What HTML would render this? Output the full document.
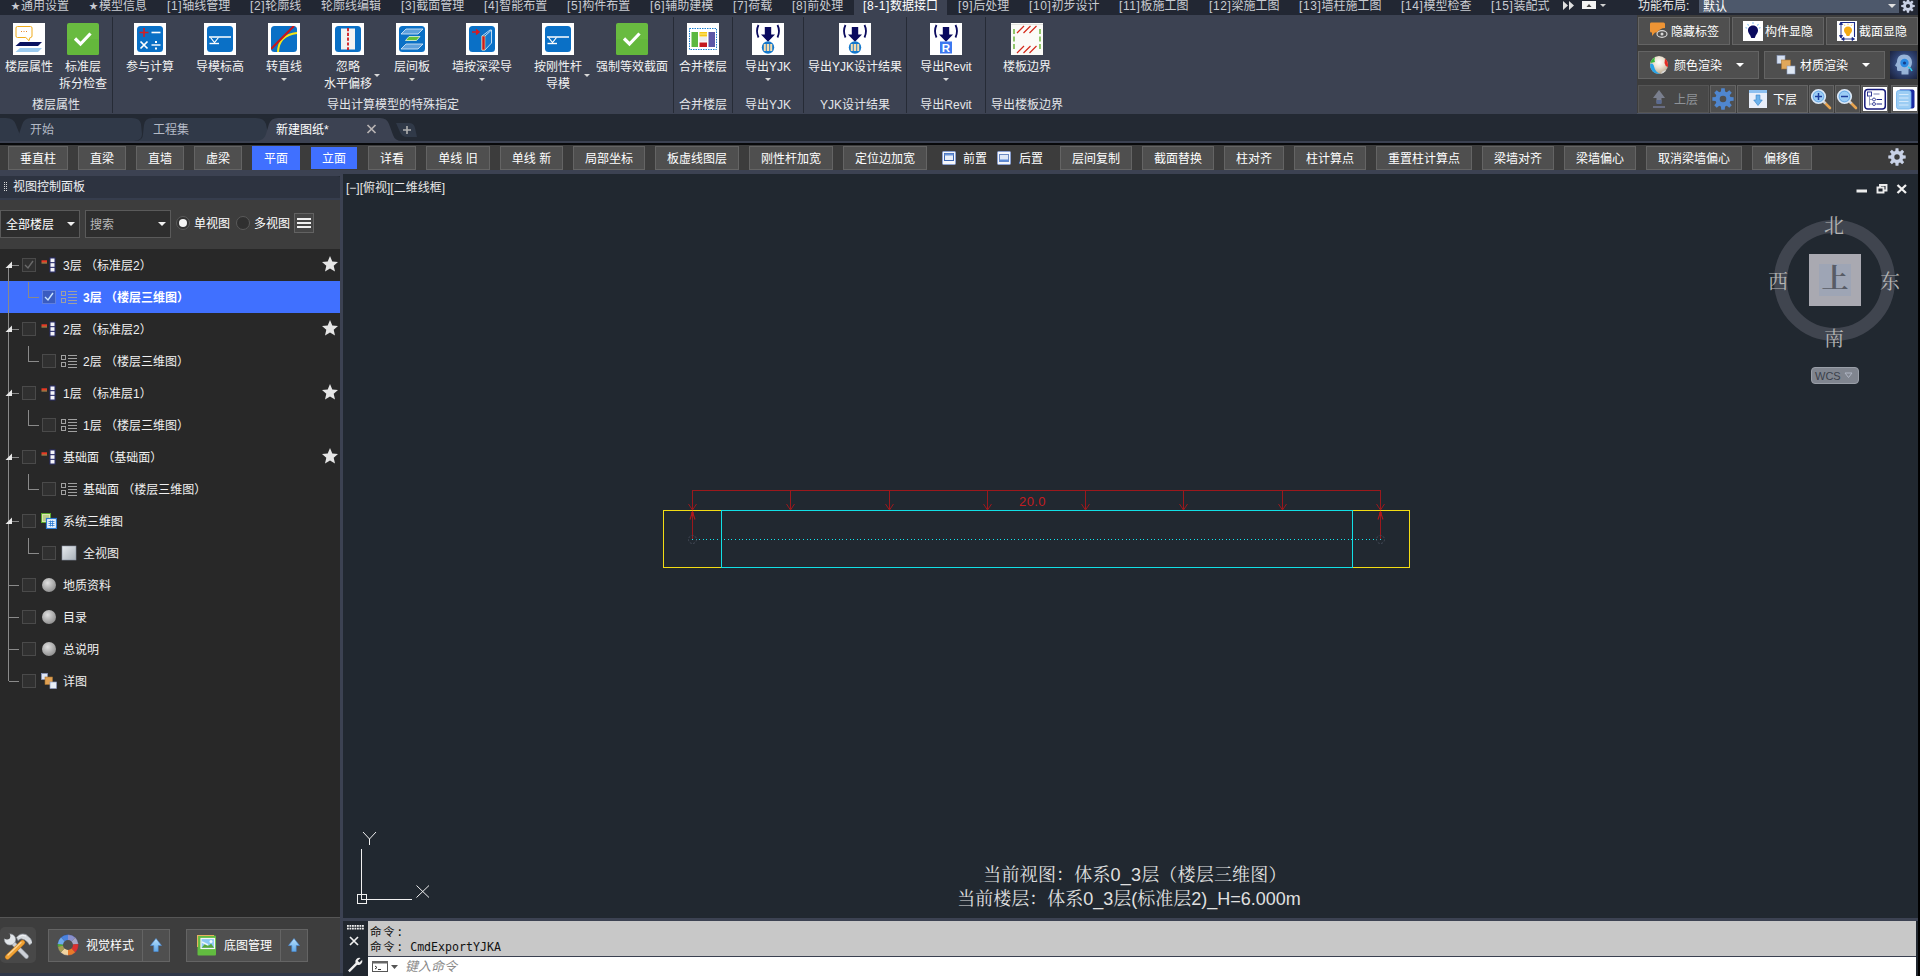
<!DOCTYPE html>
<html lang="zh-CN"><head><meta charset="utf-8"><title>结构建模</title>
<style>
*{box-sizing:border-box;margin:0;padding:0}
html,body{width:1920px;height:976px;overflow:hidden;background:#212830}
body{font-family:"Liberation Sans","Noto Sans CJK SC",sans-serif;font-size:12px;color:#e8e8e8;position:relative}
.a{position:absolute}
.t{position:absolute;white-space:nowrap;line-height:16px;height:16px;margin-top:1px}
.c{text-align:center}
.tab{position:absolute;top:-2px;height:16px;line-height:16px;white-space:nowrap;color:#c9ccd2}
.rl{position:absolute;white-space:nowrap;line-height:17px;text-align:center;color:#f2f2f2;transform:translateX(-50%)}
.gl{position:absolute;top:97px;white-space:nowrap;line-height:16px;text-align:center;color:#e4e6ea;transform:translateX(-50%)}
.sep{position:absolute;top:17px;width:1px;height:96px;background:#262b36}
.dd{position:absolute;width:0;height:0;border-left:3px solid transparent;border-right:3px solid transparent;border-top:3px solid #d8d8d8}
.ic{position:absolute;top:23px;width:32px;height:32px}
.tb{position:absolute;top:146px;height:24px;line-height:25px;background:#4f4f4f;border:1px solid #646464;text-align:center;color:#fff;white-space:nowrap}
.tb.on{background:#4070ff;border-color:#4070ff}
.rb{position:absolute;background:#4f4f4f;border:1px solid #646464}
.cb{position:absolute;width:14px;height:14px;border:1px solid #4a4a4a;background:#303030}
.tr{position:absolute;left:0;width:340px;height:32px}
.tt{position:absolute;margin-top:1px;line-height:16px;white-space:nowrap;color:#f0f0f0}
.star{position:absolute;left:321px;width:18px;height:18px}
</style></head><body>

<div class="a" style="left:0;top:0;width:1918px;height:15px;background:#222733;overflow:hidden">
<div class="a" style="left:854px;top:0;width:93px;height:15px;background:#3c4252"></div>
<div class="tab" style="left:11px"><span style="display:inline-block;width:10px;font-size:9px;vertical-align:1px">★</span>通用设置</div>
<div class="tab" style="left:89px"><span style="display:inline-block;width:10px;font-size:9px;vertical-align:1px">★</span>模型信息</div>
<div class="tab" style="left:167px"><span style="letter-spacing:0.6px">[1]</span>轴线管理</div>
<div class="tab" style="left:250px"><span style="letter-spacing:0.6px">[2]</span>轮廓线</div>
<div class="tab" style="left:321px">轮廓线编辑</div>
<div class="tab" style="left:401px"><span style="letter-spacing:0.6px">[3]</span>截面管理</div>
<div class="tab" style="left:484px"><span style="letter-spacing:0.6px">[4]</span>智能布置</div>
<div class="tab" style="left:567px"><span style="letter-spacing:0.6px">[5]</span>构件布置</div>
<div class="tab" style="left:650px"><span style="letter-spacing:0.6px">[6]</span>辅助建模</div>
<div class="tab" style="left:733px"><span style="letter-spacing:0.6px">[7]</span>荷载</div>
<div class="tab" style="left:792px"><span style="letter-spacing:0.6px">[8]</span>前处理</div>
<div class="tab" style="left:863px;color:#fff"><span style="letter-spacing:0.6px">[8-1]</span>数据接口</div>
<div class="tab" style="left:958px"><span style="letter-spacing:0.6px">[9]</span>后处理</div>
<div class="tab" style="left:1029px"><span style="letter-spacing:0.6px">[10]</span>初步设计</div>
<div class="tab" style="left:1119px"><span style="letter-spacing:0.6px">[11]</span>板施工图</div>
<div class="tab" style="left:1209px"><span style="letter-spacing:0.6px">[12]</span>梁施工图</div>
<div class="tab" style="left:1299px"><span style="letter-spacing:0.6px">[13]</span>墙柱施工图</div>
<div class="tab" style="left:1401px"><span style="letter-spacing:0.6px">[14]</span>模型检查</div>
<div class="tab" style="left:1491px"><span style="letter-spacing:0.6px">[15]</span>装配式</div>
<svg class="a" style="left:1562px;top:0" width="50" height="14" viewBox="0 0 50 14"><path d="M1 1l5 4.5-5 4.5zM7 1l5 4.5-5 4.5z" fill="#e0e0e0"/><rect x="20" y="1" width="14" height="8" fill="#f4f4f4"/><path d="M24.5 7l2.5-3 2.5 3z" fill="#444"/><path d="M38 4h6l-3 3z" fill="#d0d0d0"/></svg>
</div>
<div class="a" style="left:0;top:15px;width:1637px;height:99px;background:#3c4252"></div>
<div class="sep" style="left:112px"></div>
<div class="sep" style="left:673px"></div>
<div class="sep" style="left:732px"></div>
<div class="sep" style="left:803px"></div>
<div class="sep" style="left:906px"></div>
<div class="sep" style="left:985px"></div>
<div class="ic" style="left:13px"><svg width="100%" height="100%" viewBox="0 0 32 32" style="display:block"><rect width="32" height="32" fill="#fff"/><path d="M4.500 3.500h13q1.500 0 1.500 1.500v8q0 1.500-1.500 1.500h-0.500l-1 3.200-3.200-3.200H4.500q-1.500 0-1.500-1.500v-8q0-1.500 1.500-1.500z" fill="#fff" stroke="#f0ac1c" stroke-width="1"/><path d="M8 8h1v1H8zM10.500 8h1v1h-1zM13 8h1v1h-1z" fill="#e8862a"/><path d="M7 19h22l-4 4H2.500z" fill="#0a1260"/><path d="M7 25h22l-4 4H2.500z" fill="#9ccbf0"/></svg></div>
<div class="rl" style="left:29px;top:59px">楼层属性</div>
<div class="ic" style="left:67px"><svg width="100%" height="100%" viewBox="0 0 32 32" style="display:block"><rect width="32" height="32" rx="2" fill="#69bb40"/><rect y="16" width="32" height="16" rx="2" fill="#64b83c"/><path d="M8 15.500l5.500 5.500L23.500 10.500" stroke="#fff" stroke-width="3.200" fill="none"/></svg></div>
<div class="rl" style="left:83px;top:59px">标准层<br>拆分检查</div>
<div class="ic" style="left:134px"><svg width="100%" height="100%" viewBox="0 0 32 32" style="display:block"><rect width="32" height="32" fill="#fff"/><rect x="3" y="3" width="26" height="26" rx="3.500" fill="#0a70c6"/><path d="M5.500 9.500h9M10 5v9" stroke="#d41e24" stroke-width="1.600"/><path d="M17.500 9.500h9" stroke="#fff" stroke-width="1.600"/><path d="M6.500 18.500l7 7m0-7l-7 7" stroke="#fff" stroke-width="1.700"/><path d="M17.500 22h9" stroke="#fff" stroke-width="1.400"/><rect x="21" y="18" width="2" height="2" fill="#fff"/><rect x="21" y="24.500" width="2" height="2" fill="#fff"/></svg></div>
<div class="rl" style="left:150px;top:59px">参与计算</div>
<div class="dd" style="left:147px;top:78px"></div>
<div class="ic" style="left:204px"><svg width="100%" height="100%" viewBox="0 0 32 32" style="display:block"><rect width="32" height="32" fill="#fff"/><rect x="3" y="3" width="26" height="26" rx="3.500" fill="#0a70c6"/><path d="M5 14h22" stroke="#fff" stroke-width="1.500"/><path d="M6.500 14.500l4 5 4-5" stroke="#fff" stroke-width="1.200" fill="none"/><path d="M5.500 20.500h9.500" stroke="#fff" stroke-width="1.400"/></svg></div>
<div class="rl" style="left:220px;top:59px">导模标高</div>
<div class="dd" style="left:217px;top:78px"></div>
<div class="ic" style="left:268px"><svg width="100%" height="100%" viewBox="0 0 32 32" style="display:block"><rect width="32" height="32" fill="#fff"/><clipPath id="cv"><rect x="3" y="3" width="26" height="26" rx="3.500"/></clipPath><rect x="3" y="3" width="26" height="26" rx="3.500" fill="#0a70c6"/><g clip-path="url(#cv)"><path d="M10 30Q10 12 30 10" stroke="#f6e614" stroke-width="2" fill="none"/><path d="M3 26L26 3" stroke="#c8141a" stroke-width="2.200"/></g></svg></div>
<div class="rl" style="left:284px;top:59px">转直线</div>
<div class="dd" style="left:281px;top:78px"></div>
<div class="ic" style="left:332px"><svg width="100%" height="100%" viewBox="0 0 32 32" style="display:block"><rect width="32" height="32" fill="#fff"/><rect x="3" y="3" width="26" height="26" rx="3.500" fill="#0a70c6"/><rect x="9" y="5.500" width="14" height="21" fill="#f2f2f2"/><path d="M16 5v22" stroke="#d0161c" stroke-width="1.800" stroke-dasharray="3.200 1.600"/></svg></div>
<div class="rl" style="left:348px;top:59px">忽略<br>水平偏移</div>
<div class="dd" style="left:374px;top:74px"></div>
<div class="ic" style="left:396px"><svg width="100%" height="100%" viewBox="0 0 32 32" style="display:block"><rect width="32" height="32" fill="#fff"/><rect x="3" y="3" width="26" height="26" rx="3.500" fill="#0a70c6"/><path d="M10 6h17l-5 5H5z" fill="#5ea0dc" stroke="#dfeefa" stroke-width="0.800"/><path d="M13 13.500h11l-3.500 4H9.500z" fill="#64c03a" stroke="#e8f6dc" stroke-width="0.800"/><path d="M10 21h17l-5 5H5z" fill="#5ea0dc" stroke="#dfeefa" stroke-width="0.800"/></svg></div>
<div class="rl" style="left:412px;top:59px">层间板</div>
<div class="dd" style="left:409px;top:78px"></div>
<div class="ic" style="left:466px"><svg width="100%" height="100%" viewBox="0 0 32 32" style="display:block"><rect width="32" height="32" fill="#fff"/><rect x="3" y="3" width="26" height="26" rx="3.500" fill="#0a70c6"/><path d="M6 9h6M10 6.500l3 2.500-3 2.500" stroke="#d81a20" stroke-width="1.500" fill="none"/><path d="M10 6.200l3.400 2.800-3.400 2.800z" fill="#d81a20"/><path d="M16 13l8-6h1.500v13l-6.500 7H16z" fill="#1478cc" stroke="#e6f2fc" stroke-width="0.800"/><path d="M19 13l6-5.500" stroke="#e6f2fc" stroke-width="0.800"/><rect x="16" y="13" width="3" height="14" fill="#cc1a1e" stroke="#f0d890" stroke-width="0.600"/></svg></div>
<div class="rl" style="left:482px;top:59px">墙按深梁导</div>
<div class="dd" style="left:479px;top:78px"></div>
<div class="ic" style="left:542px"><svg width="100%" height="100%" viewBox="0 0 32 32" style="display:block"><rect width="32" height="32" fill="#fff"/><rect x="3" y="3" width="26" height="26" rx="3.500" fill="#0a70c6"/><path d="M5 14h22" stroke="#fff" stroke-width="1.500"/><path d="M6.500 14.500l4 5 4-5" stroke="#fff" stroke-width="1.200" fill="none"/><path d="M5.500 20.500h9.500" stroke="#fff" stroke-width="1.400"/></svg></div>
<div class="rl" style="left:558px;top:59px">按刚性杆<br>导模</div>
<div class="dd" style="left:584px;top:74px"></div>
<div class="ic" style="left:616px"><svg width="100%" height="100%" viewBox="0 0 32 32" style="display:block"><rect width="32" height="32" rx="2" fill="#69bb40"/><rect y="16" width="32" height="16" rx="2" fill="#64b83c"/><path d="M8 15.500l5.500 5.500L23.500 10.500" stroke="#fff" stroke-width="3.200" fill="none"/></svg></div>
<div class="rl" style="left:632px;top:59px">强制等效截面</div>
<div class="ic" style="left:687px"><svg width="100%" height="100%" viewBox="0 0 32 32" style="display:block"><rect width="32" height="32" fill="#fff"/><rect x="2.500" y="5.500" width="27" height="21" fill="#fff" stroke="#1c7fd0" stroke-width="1" stroke-dasharray="1.500 1"/><rect x="4.500" y="9" width="6.500" height="15" fill="#5cb840"/><rect x="12.500" y="9" width="7.500" height="4.500" fill="#f6c818"/><rect x="12.500" y="10.500" width="7.500" height="1" fill="#fbe88a"/><rect x="12.500" y="14" width="7.500" height="4.500" fill="#ececec"/><rect x="12.500" y="19.500" width="7.500" height="4.500" fill="#c41a1e"/><rect x="21.500" y="9" width="6.500" height="15" fill="#5c56a6"/></svg></div>
<div class="rl" style="left:703px;top:59px">合并楼层</div>
<div class="ic" style="left:752px"><svg width="100%" height="100%" viewBox="0 0 32 32" style="display:block"><rect width="32" height="32" fill="#fff"/><path d="M12.800 4h6.400v7.500h3.800l-7 7.200-7-7.200h3.800z" fill="#0a0a5e"/><path d="M6.500 2Q3.500 8 6.500 14.500M25.500 2Q28.500 8 25.500 14.500" stroke="#0a0a5e" stroke-width="1.800" fill="none"/><circle cx="16" cy="24.500" r="6.200" fill="#1478cc"/><rect x="11.800" y="21" width="8.400" height="7" fill="#f6dcae"/><path d="M14.300 21v7M17.700 21v7" stroke="#1478cc" stroke-width="0.900"/></svg></div>
<div class="rl" style="left:768px;top:59px">导出YJK</div>
<div class="dd" style="left:765px;top:78px"></div>
<div class="ic" style="left:839px"><svg width="100%" height="100%" viewBox="0 0 32 32" style="display:block"><rect width="32" height="32" fill="#fff"/><path d="M12.800 4h6.400v7.500h3.800l-7 7.200-7-7.200h3.800z" fill="#0a0a5e"/><path d="M6.500 2Q3.500 8 6.500 14.500M25.500 2Q28.500 8 25.500 14.500" stroke="#0a0a5e" stroke-width="1.800" fill="none"/><circle cx="16" cy="24.500" r="6.200" fill="#1478cc"/><rect x="11.800" y="21" width="8.400" height="7" fill="#f6dcae"/><path d="M14.300 21v7M17.700 21v7" stroke="#1478cc" stroke-width="0.900"/></svg></div>
<div class="rl" style="left:855px;top:59px">导出YJK设计结果</div>
<div class="ic" style="left:930px"><svg width="100%" height="100%" viewBox="0 0 32 32" style="display:block"><rect width="32" height="32" fill="#fff"/><path d="M12.800 4h6.400v7.500h3.800l-7 7.200-7-7.200h3.800z" fill="#0a0a5e"/><path d="M6.500 2Q3.500 8 6.500 14.500M25.500 2Q28.500 8 25.500 14.500" stroke="#0a0a5e" stroke-width="1.800" fill="none"/><rect x="10" y="18.500" width="12" height="12" fill="#3c78f0"/><text x="16" y="28.800" font-family="Liberation Sans, sans-serif" font-size="11.500" font-weight="bold" fill="#fff" text-anchor="middle">R</text></svg></div>
<div class="rl" style="left:946px;top:59px">导出Revit</div>
<div class="dd" style="left:943px;top:78px"></div>
<div class="ic" style="left:1011px"><svg width="100%" height="100%" viewBox="0 0 32 32" style="display:block"><rect width="32" height="32" fill="#fbfbf8"/><path d="M0 1.500h32" stroke="#e4e4e0" stroke-width="1"/><path d="M3 6v21M29 6v21" stroke="#70b83e" stroke-width="1.500" stroke-dasharray="5 2.500"/><path d="M6 10l7-7M12.500 10l7-7M18.500 10l7-7M6 30l7-7M12.500 30l7-7M18.500 30l7-7" stroke="#d42a1c" stroke-width="1.200"/></svg></div>
<div class="rl" style="left:1027px;top:59px">楼板边界</div>
<div class="gl" style="left:56px">楼层属性</div>
<div class="gl" style="left:393px">导出计算模型的特殊指定</div>
<div class="gl" style="left:703px">合并楼层</div>
<div class="gl" style="left:768px">导出YJK</div>
<div class="gl" style="left:855px">YJK设计结果</div>
<div class="gl" style="left:946px">导出Revit</div>
<div class="gl" style="left:1027px">导出楼板边界</div>
<div class="a" style="left:1637px;top:0;width:281px;height:15px;background:#222733"></div>
<div class="t" style="left:1638px;top:-3px;color:#e6e6e6">功能布局:</div>
<div class="a" style="left:1699px;top:0;width:200px;height:13px;background:#4d586b"></div>
<div class="t" style="left:1703px;top:-2px;color:#fff">默认</div>
<div class="dd" style="left:1888px;top:4px;border-left-width:4px;border-right-width:4px;border-top-width:4px;border-top-color:#e0e0e0"></div>
<div class="a" style="left:1901px;top:-1px;width:14px;height:14px"><svg width="14" height="14" viewBox="0 0 14 14" style="display:block"><path d="M11.72 5.69L13.77 5.89L13.77 8.11L11.72 8.31L11.27 9.41L12.57 11.00L11.00 12.57L9.41 11.27L8.31 11.72L8.11 13.77L5.89 13.77L5.69 11.72L4.59 11.27L3.00 12.57L1.43 11.00L2.73 9.41L2.28 8.31L0.23 8.11L0.23 5.89L2.28 5.69L2.73 4.59L1.43 3.00L3.00 1.43L4.59 2.73L5.69 2.28L5.89 0.23L8.11 0.23L8.31 2.28L9.41 2.73L11.00 1.43L12.57 3.00L11.27 4.59zM9.10 7.00A2.10 2.10 0 1 0 4.90 7.00A2.10 2.10 0 1 0 9.10 7.00z" fill="#c8d0e4" fill-rule="evenodd"/></svg></div>
<div class="a" style="left:1637px;top:15px;width:281px;height:99px;background:#3d3d3d"></div>
<div class="a" style="left:1637px;top:113px;width:281px;height:1px;background:#4a5162"></div>
<div class="rb" style="left:1638px;top:17px;width:92px;height:28px"></div>
<div class="a" style="left:1649px;top:21px;width:20px;height:20px"><svg width="100%" height="100%" viewBox="0 0 20 20" style="display:block"><path d="M2 1.500h12.500q1.500 0 1.500 1.500v4q-5 0-8 4.500H6l-3 3.500v-3.500H2.500q-1.500 0-1.500-1.500V3q0-1.500 1-1.500z" fill="#ee9434"/><ellipse cx="13" cy="13" rx="5" ry="3.300" fill="#4f4f4f" stroke="#d8d8d8" stroke-width="1.200"/><circle cx="13" cy="13" r="1.500" fill="#d8d8d8"/></svg></div>
<div class="t" style="left:1671px;top:23px;color:#fff">隐藏标签</div>
<div class="rb" style="left:1732px;top:17px;width:92px;height:28px"></div>
<div class="a" style="left:1743px;top:21px;width:20px;height:20px"><svg width="100%" height="100%" viewBox="0 0 20 20" style="display:block"><rect width="20" height="20" fill="#fff"/><path d="M10 4.500c3.300 0 5 2.400 5 5 0 2.300-1.500 3.500-2.300 5-.3.800-.5 1.600-1 2.500h-3.400c-.5-.9-.7-1.700-1-2.500C6.500 13 5 11.800 5 9.500c0-2.600 1.700-5 5-5z" fill="#0a0a5e"/><path d="M10 1v2M4.500 3l1.200 1.600M15.500 3l-1.200 1.600M2.500 6.500l1.700.8M17.500 6.500l-1.700.8" stroke="#8cc4f0" stroke-width="1.100"/></svg></div>
<div class="t" style="left:1765px;top:23px;color:#fff">构件显隐</div>
<div class="rb" style="left:1826px;top:17px;width:92px;height:28px"></div>
<div class="a" style="left:1837px;top:21px;width:20px;height:20px"><svg width="100%" height="100%" viewBox="0 0 20 20" style="display:block"><rect width="20" height="20" fill="#fff"/><path d="M4 1.500h13.500v14.500" stroke="#1a2a8a" stroke-width="1.100" fill="none"/><path d="M4 2v14M4 1l-1.500 2.500h3zM4 17l-1.500-2.500h3zM5 18h12M4.500 18l2.500-1.500v3zM17.500 18l-2.500-1.500v3z" stroke="#1a2a8a" stroke-width="0.900" fill="#1a2a8a"/><path d="M11 5.500c2.600 0 4 1.800 4 3.800 0 1.800-1.200 2.600-1.900 3.800l-.8 2h-2.600l-.8-2C8.200 11.900 7 11.100 7 9.300c0-2 1.400-3.800 4-3.800z" fill="#f4aa14"/><path d="M11 2.500v1.500M7 3.500l.9 1.300M15 3.500l-.9 1.300" stroke="#f4c860" stroke-width="1"/></svg></div>
<div class="t" style="left:1859px;top:23px;color:#fff">截面显隐</div>
<div class="rb" style="left:1638px;top:51px;width:121px;height:28px"></div>
<div class="a" style="left:1649px;top:55px;width:20px;height:20px"><svg width="100%" height="100%" viewBox="0 0 20 20" style="display:block"><defs><radialGradient id="bg1" cx="0.500" cy="0.350" r="0.650"><stop offset="0" stop-color="#fff"/><stop offset="0.450" stop-color="#ede3d2"/><stop offset="1" stop-color="#b8a890"/></radialGradient></defs><circle cx="10" cy="10" r="9" fill="url(#bg1)"/><path d="M1.200 9a9 9 0 0 0 10 10q-5-2-6-7T1.200 9z" fill="#28a4e8"/><path d="M1.500 8q1-4 4.500-6-1 3 0 5z" fill="#38b83c"/><path d="M16 3.500a9 9 0 0 1 2.800 8.500q-2.800-1-3.300-4z" fill="#e42c24"/><path d="M11.200 19a9 9 0 0 0 6-3.500q-3-1-6 3.500z" fill="#d8d8d8"/></svg></div>
<div class="t" style="left:1674px;top:57px;color:#fff">颜色渲染</div>
<div class="dd" style="left:1736px;top:63px;border-left-width:4px;border-right-width:4px;border-top-width:4px;border-top-color:#fff"></div>
<div class="rb" style="left:1764px;top:51px;width:121px;height:28px"></div>
<div class="a" style="left:1776px;top:55px;width:20px;height:20px"><svg width="100%" height="100%" viewBox="0 0 20 20" style="display:block"><rect x="1" y="0.500" width="8" height="8" fill="#d4dff0" stroke="#8a9cc0" stroke-width="0.600"/><rect x="5.500" y="5" width="9" height="9" fill="#e0a85c" stroke="#a87430" stroke-width="0.600"/><rect x="11" y="11" width="8" height="8" fill="#dfe8f4" stroke="#8a9cc0" stroke-width="0.600"/></svg></div>
<div class="t" style="left:1800px;top:57px;color:#fff">材质渲染</div>
<div class="dd" style="left:1862px;top:63px;border-left-width:4px;border-right-width:4px;border-top-width:4px;border-top-color:#fff"></div>
<div class="a" style="left:1890px;top:51px;width:27px;height:28px"><svg width="27" height="28" viewBox="0 0 27 28" style="display:block"><defs><radialGradient id="aig" cx="0.550" cy="0.450" r="0.700"><stop offset="0" stop-color="#5a7cb4"/><stop offset="0.600" stop-color="#2c3e6c"/><stop offset="1" stop-color="#1c2440"/></radialGradient></defs><rect width="27" height="28" fill="url(#aig)"/><path d="M14 3.500c5 0 8 3.500 8 8 0 3.500-2 5.500-3.500 7v5h-7v-3.500H8.500q-1.500 0-1.500-1.500v-2.500L5 14.500l2-3.500c0-4.500 2.500-7.500 7-7.500z" fill="#a8c4e6" opacity="0.850"/><circle cx="14.500" cy="12" r="4.200" fill="#2a8ae4"/><circle cx="14.500" cy="12" r="1.600" fill="#16408c"/><path d="M18 16q3 1 4 4" stroke="#30d0f0" stroke-width="1.500" fill="none"/></svg></div>
<div class="rb" style="left:1638px;top:85px;width:71px;height:28px;background:#484848;border-color:#555"></div>
<div class="a" style="left:1652px;top:89px;width:14px;height:20px"><svg width="14" height="20" viewBox="0 0 14 20" style="display:block"><path d="M7 1l6 8H9.500v5h-5V9H1z" fill="#7a7f8e"/><path d="M4.500 11h5v4h-5z" fill="#5a6a90"/><path d="M1 18h12" stroke="#7a80a0" stroke-width="1.300"/></svg></div>
<div class="t" style="left:1674px;top:91px;color:#8f9398">上层</div>
<div class="rb" style="left:1710px;top:85px;width:26px;height:28px"></div>
<div class="a" style="left:1712px;top:88px;width:22px;height:22px"><svg width="22" height="22" viewBox="0 0 22 22" style="display:block"><path d="M18.42 8.94L21.64 9.26L21.64 12.74L18.42 13.06L17.70 14.79L19.76 17.29L17.29 19.76L14.79 17.70L13.06 18.42L12.74 21.64L9.26 21.64L8.94 18.42L7.21 17.70L4.71 19.76L2.24 17.29L4.30 14.79L3.58 13.06L0.36 12.74L0.36 9.26L3.58 8.94L4.30 7.21L2.24 4.71L4.71 2.24L7.21 4.30L8.94 3.58L9.26 0.36L12.74 0.36L13.06 3.58L14.79 4.30L17.29 2.24L19.76 4.71L17.70 7.21zM14.30 11.00A3.30 3.30 0 1 0 7.70 11.00A3.30 3.30 0 1 0 14.30 11.00z" fill="#4f86cf" fill-rule="evenodd"/></svg></div>
<div class="rb" style="left:1737px;top:85px;width:71px;height:28px"></div>
<div class="a" style="left:1749px;top:90px;width:18px;height:18px"><svg width="18" height="18" viewBox="0 0 19 18" preserveAspectRatio="none" style="display:block"><rect width="19" height="18" fill="#e8eefa"/><rect width="19" height="3" fill="#8ec0f0"/><path d="M7.500 5h4v5h2.500l-4.500 5.500L5 10h2.500z" fill="#6cb2ec" stroke="#3c88cc" stroke-width="0.700"/></svg></div>
<div class="t" style="left:1773px;top:91px;color:#fff">下层</div>
<div class="rb" style="left:1809px;top:85px;width:25px;height:28px"></div>
<div class="a" style="left:1810px;top:88px;width:23px;height:23px"><svg width="23" height="23" viewBox="0 0 23 23" style="display:block"><path d="M13.500 13.500l6.500 6.500" stroke="#e8a450" stroke-width="2.600" stroke-linecap="round"/><path d="M13 13l2.500 2.500" stroke="#c8ccd4" stroke-width="2.400"/><circle cx="8.500" cy="8.500" r="6.800" fill="#9ccdf6" stroke="#dce8f6" stroke-width="1.600"/><circle cx="8.500" cy="8.500" r="5.300" fill="none" stroke="#5a9ee0" stroke-width="0.700"/><path d="M5 8.500h7" stroke="#1c3c9c" stroke-width="1.500"/><path d="M8.500 5v7" stroke="#1c3c9c" stroke-width="1.500"/></svg></div>
<div class="rb" style="left:1835px;top:85px;width:25px;height:28px"></div>
<div class="a" style="left:1836px;top:88px;width:23px;height:23px"><svg width="23" height="23" viewBox="0 0 23 23" style="display:block"><path d="M13.500 13.500l6.500 6.500" stroke="#e8a450" stroke-width="2.600" stroke-linecap="round"/><path d="M13 13l2.500 2.500" stroke="#c8ccd4" stroke-width="2.400"/><circle cx="8.500" cy="8.500" r="6.800" fill="#9ccdf6" stroke="#dce8f6" stroke-width="1.600"/><circle cx="8.500" cy="8.500" r="5.300" fill="none" stroke="#5a9ee0" stroke-width="0.700"/><path d="M5 8.500h7" stroke="#1c3c9c" stroke-width="1.500"/></svg></div>
<div class="rb" style="left:1861px;top:85px;width:27px;height:28px"></div>
<div class="a" style="left:1863px;top:87px;width:24px;height:24px"><svg width="100%" height="100%" viewBox="0 0 24 24" style="display:block"><rect width="24" height="24" fill="#fff"/><rect x="1.800" y="2.500" width="20.500" height="19.500" rx="3" fill="#fff" stroke="#161a7c" stroke-width="1.500"/><rect x="4.500" y="5" width="4" height="4" fill="#fff" stroke="#1c2488" stroke-width="0.900"/><path d="M10.500 7h6" stroke="#8a90c0" stroke-width="1.200"/><path d="M6.500 9v9.500M6.500 12.500h3M6.500 17h3" stroke="#8890b8" stroke-width="0.900" fill="none"/><circle cx="11" cy="12.500" r="1.500" fill="#fff" stroke="#1c2488" stroke-width="0.800"/><circle cx="11" cy="17" r="1.500" fill="#fff" stroke="#1c2488" stroke-width="0.800"/><path d="M13.500 12.500h5.500M13.500 17h5.500" stroke="#1c2488" stroke-width="1.100"/></svg></div>
<div class="rb" style="left:1891px;top:85px;width:27px;height:28px"></div>
<div class="a" style="left:1893px;top:87px;width:24px;height:24px"><svg width="100%" height="100%" viewBox="0 0 24 24" style="display:block"><rect width="24" height="24" fill="#fff"/><path d="M6.500 2.500h13q2 0 2 2v15q0 2-2 2h-2z" fill="#1828a0"/><rect x="3.500" y="3.500" width="14.500" height="18.500" rx="2.200" fill="#9ccdf4" stroke="#6cb0ec" stroke-width="0.800"/><path d="M6 7.500h9.500M6 11h9.500M6 14.500h9.500M6 18h9.500" stroke="#d4eafc" stroke-width="1.200"/></svg></div>
<div class="a" style="left:0;top:114px;width:1918px;height:29px;background:#232933"></div>
<div class="a" style="left:0;top:141px;width:1918px;height:2px;background:#3c4252"></div>
<svg class="a" style="left:0;top:114px" width="430" height="29" viewBox="0 0 430 29">
<path d="M0 4 H6 Q14 4 16 11 L20 21 Q22 27 28 27 H0z" fill="#303948"/>
<path d="M10 27 Q17 27 19 20 L22 11 Q24 4 31 4 H132 Q140 4 141 10 L142 20 Q142 27 134 27z" fill="#303948"/>
<path d="M135 27 Q143 27 143 20 L144 11 Q145 4 152 4 H256 Q264 4 266 10 L268 20 Q269 27 262 27z" fill="#303948"/>
<path d="M256 29 V27 Q264 27 266 20 L269 10 Q271 4 278 4 H380 Q387 4 389 10 L393 21 Q395 27 402 27 V29z" fill="#3c4252"/>
<path d="M396 9 H409 Q414 9 415 14 L417 23 H407 Q402 23 400 18z" fill="#303948"/>
<path d="M367.500 11l8 8m0-8l-8 8" stroke="#b9b4b4" stroke-width="1.7" fill="none"/>
<path d="M403 16h8m-4-4v8" stroke="#b0b0b0" stroke-width="1.6" fill="none"/>
</svg>
<div class="t" style="left:30px;top:121px;color:#b4bac6">开始</div>
<div class="t" style="left:153px;top:121px;color:#b4bac6">工程集</div>
<div class="t" style="left:276px;top:121px;color:#fff">新建图纸*</div>
<div class="a" style="left:0;top:143px;width:1918px;height:2px;background:#08090b"></div>
<div class="a" style="left:0;top:145px;width:1918px;height:25px;background:#3c3c3c"></div>
<div class="a" style="left:0;top:170px;width:1918px;height:6px;background:#3c4252"></div>
<div class="tb" style="left:8px;width:60px">垂直柱</div>
<div class="tb" style="left:78px;width:48px">直梁</div>
<div class="tb" style="left:136px;width:48px">直墙</div>
<div class="tb" style="left:194px;width:48px">虚梁</div>
<div class="tb on" style="left:252px;width:48px">平面</div>
<div class="tb on" style="left:311px;width:46px;top:147px;height:22px;line-height:23px">立面</div>
<div class="tb" style="left:368px;width:48px">详看</div>
<div class="tb" style="left:426px;width:64px">单线 旧</div>
<div class="tb" style="left:500px;width:63px">单线 新</div>
<div class="tb" style="left:573px;width:72px">局部坐标</div>
<div class="tb" style="left:655px;width:84px">板虚线图层</div>
<div class="tb" style="left:749px;width:84px">刚性杆加宽</div>
<div class="tb" style="left:843px;width:84px">定位边加宽</div>
<div class="tb" style="left:1060px;width:72px">层间复制</div>
<div class="tb" style="left:1142px;width:72px">截面替换</div>
<div class="tb" style="left:1224px;width:60px">柱对齐</div>
<div class="tb" style="left:1294px;width:72px">柱计算点</div>
<div class="tb" style="left:1376px;width:96px">重置柱计算点</div>
<div class="tb" style="left:1482px;width:72px">梁墙对齐</div>
<div class="tb" style="left:1564px;width:72px">梁墙偏心</div>
<div class="tb" style="left:1646px;width:96px">取消梁墙偏心</div>
<div class="tb" style="left:1752px;width:60px">偏移值</div>
<div class="a" style="left:942px;top:151px;width:14px;height:14px"><svg width="100%" height="100%" viewBox="0 0 14 14" style="display:block"><rect x="0.500" y="0.500" width="13" height="13" rx="1" fill="#f4f6fa" stroke="#8aa0d0" stroke-width="1"/><rect x="2.500" y="2.500" width="9" height="7" fill="#e8eef8" stroke="#3a64b0" stroke-width="1"/><rect x="2.500" y="2.500" width="9" height="2" fill="#6a94d8"/></svg></div>
<div class="t" style="left:963px;top:150px;color:#fff">前置</div>
<div class="a" style="left:997px;top:151px;width:14px;height:14px"><svg width="100%" height="100%" viewBox="0 0 14 14" style="display:block"><rect x="0.500" y="0.500" width="13" height="13" rx="1" fill="#f4f6fa" stroke="#8aa0d0" stroke-width="1"/><rect x="2.500" y="3.500" width="9" height="7" fill="#dfe8f6" stroke="#6a88c0" stroke-width="1"/><rect x="2.500" y="8.500" width="9" height="2" fill="#5a8ad8"/></svg></div>
<div class="t" style="left:1019px;top:150px;color:#fff">后置</div>
<div class="a" style="left:1888px;top:148px;width:18px;height:18px"><svg width="18" height="18" viewBox="0 0 18 18" style="display:block"><path d="M15.07 7.31L17.70 7.57L17.70 10.43L15.07 10.69L14.48 12.10L16.16 14.14L14.14 16.16L12.10 14.48L10.69 15.07L10.43 17.70L7.57 17.70L7.31 15.07L5.90 14.48L3.86 16.16L1.84 14.14L3.52 12.10L2.93 10.69L0.30 10.43L0.30 7.57L2.93 7.31L3.52 5.90L1.84 3.86L3.86 1.84L5.90 3.52L7.31 2.93L7.57 0.30L10.43 0.30L10.69 2.93L12.10 3.52L14.14 1.84L16.16 3.86L14.48 5.90zM11.70 9.00A2.70 2.70 0 1 0 6.30 9.00A2.70 2.70 0 1 0 11.70 9.00z" fill="#c9d2e6" fill-rule="evenodd"/></svg></div>
<div class="a" style="left:0;top:176px;width:341px;height:24px;background:#2d3340;border-top-right-radius:4px"></div>
<div class="a" style="left:0;top:198px;width:341px;height:2px;background:#363d4d"></div>
<div class="a" style="left:340px;top:174px;width:3px;height:802px;background:#3c4252"></div>
<svg class="a" style="left:4px;top:182px" width="3" height="10" viewBox="0 0 3 10"><path d="M0 0h1v1H0zM2 0h1v1H2zM0 2h1v1H0zM2 2h1v1H2zM0 4h1v1H0zM2 4h1v1H2zM0 6h1v1H0zM2 6h1v1H2zM0 8h1v1H0zM2 8h1v1H2z" fill="#d8d8d8"/></svg>
<div class="t" style="left:13px;top:178px;color:#eef0f4">视图控制面板</div>
<div class="a" style="left:0;top:200px;width:340px;height:49px;background:#3d3d3d"></div>
<div class="a" style="left:0;top:210px;width:80px;height:28px;background:#2e2e2e;border:1px solid #5a5a5a"></div>
<div class="t" style="left:6px;top:216px;color:#fff">全部楼层</div>
<div class="dd" style="left:67px;top:222px;border-left-width:4px;border-right-width:4px;border-top-width:4px;border-top-color:#f0f0f0"></div>
<div class="a" style="left:85px;top:210px;width:86px;height:28px;background:#2e2e2e;border:1px solid #5a5a5a"></div>
<div class="t" style="left:90px;top:216px;color:#b8b8b8">搜索</div>
<div class="dd" style="left:158px;top:222px;border-left-width:4px;border-right-width:4px;border-top-width:4px;border-top-color:#f0f0f0"></div>
<div class="a" style="left:176px;top:216px;width:14px;height:14px;border-radius:50%;border:1px solid #5a5a5a;background:#333"></div>
<div class="a" style="left:179px;top:219px;width:8px;height:8px;border-radius:50%;background:#f4f4f4"></div>
<div class="t" style="left:194px;top:215px;color:#fff">单视图</div>
<div class="a" style="left:236px;top:216px;width:14px;height:14px;border-radius:50%;border:1px solid #5a5a5a;background:#303030"></div>
<div class="t" style="left:254px;top:215px;color:#fff">多视图</div>
<div class="a" style="left:294px;top:213px;width:20px;height:20px;border:1px solid #626262;background:#454545"></div>
<div class="a" style="left:297px;top:218px;width:14px;height:2px;background:#f0f0f0;box-shadow:0 4px 0 #f0f0f0,0 8px 0 #f0f0f0"></div>
<div class="a" style="left:0;top:249px;width:340px;height:668px;background:#282828"></div>
<div class="a" style="left:0;top:281px;width:340px;height:32px;background:#4070ff"></div>
<div class="a" style="left:8px;top:265px;width:1px;height:416px;background:#8a8a8a"></div>
<div class="a" style="left:9px;top:265px;width:10px;height:1px;background:#8a8a8a"></div>
<svg class="a" style="left:5px;top:261px" width="8" height="8" viewBox="0 0 8 8"><path d="M7 0.500V7H0.500z" fill="#e8e8e8"/></svg>
<div class="cb" style="left:22px;top:258px"></div>
<svg class="a" style="left:22px;top:258px" width="14" height="14" viewBox="0 0 14 14"><path d="M3 7l3 3 5-7" stroke="#6a6a6a" stroke-width="1.4" fill="none"/></svg>
<div class="a" style="left:41px;top:257px;width:16px;height:16px"><svg width="100%" height="100%" viewBox="0 0 16 16" style="display:block"><rect x="0.500" y="3.300" width="5.500" height="2.200" fill="#e83a24"/><path d="M0.500 6h5.500" stroke="#e8b85a" stroke-width="0.800"/><rect x="8.500" y="0.500" width="6" height="15" fill="#2a2e6c"/><rect x="9.500" y="1.500" width="4" height="3.600" fill="#f4f4fa"/><rect x="9.500" y="6.200" width="4" height="3.600" fill="#f4f4fa"/><rect x="9.500" y="10.900" width="4" height="3.600" fill="#f4f4fa"/></svg></div>
<div class="tt" style="left:63px;top:257px">3层 （标准层2）</div>
<svg class="star" style="top:255px" viewBox="0 0 18 18"><path d="M9 1l2.300 5.400 5.700.500-4.300 3.800 1.300 5.700L9 13.400 4 16.400l1.300-5.700L1 6.900l5.700-.500z" fill="#e6e6e6"/></svg>
<div class="a" style="left:28px;top:282px;width:1px;height:16px;background:#8a8a8a"></div>
<div class="a" style="left:28px;top:297px;width:11px;height:1px;background:#8a8a8a"></div>
<div class="cb" style="left:42px;top:290px;background:#3a5cc0;border-color:#5f7fe0"></div>
<svg class="a" style="left:42px;top:290px" width="14" height="14" viewBox="0 0 14 14"><path d="M3 7l3 3 5-7" stroke="#c8e4ff" stroke-width="1.4" fill="none"/></svg>
<div class="a" style="left:61px;top:289px;width:16px;height:16px"><svg width="100%" height="100%" viewBox="0 0 16 16" style="display:block"><rect x="0.500" y="2.500" width="4" height="4" fill="none" stroke="#a0a0a0"/><rect x="0.500" y="9.500" width="4" height="4" fill="none" stroke="#a0a0a0"/><path d="M7 2.500h9M7 5.500h9M7 8.500h9M7 11.500h9M7 14.500h9" stroke="#a0a0a0" stroke-width="1"/></svg></div>
<div class="tt" style="left:83px;top:289px;font-weight:bold;color:#fff">3层 （楼层三维图）</div>
<div class="a" style="left:9px;top:329px;width:10px;height:1px;background:#8a8a8a"></div>
<svg class="a" style="left:5px;top:325px" width="8" height="8" viewBox="0 0 8 8"><path d="M7 0.500V7H0.500z" fill="#e8e8e8"/></svg>
<div class="cb" style="left:22px;top:322px"></div>
<div class="a" style="left:41px;top:321px;width:16px;height:16px"><svg width="100%" height="100%" viewBox="0 0 16 16" style="display:block"><rect x="0.500" y="3.300" width="5.500" height="2.200" fill="#e83a24"/><path d="M0.500 6h5.500" stroke="#e8b85a" stroke-width="0.800"/><rect x="8.500" y="0.500" width="6" height="15" fill="#2a2e6c"/><rect x="9.500" y="1.500" width="4" height="3.600" fill="#f4f4fa"/><rect x="9.500" y="6.200" width="4" height="3.600" fill="#f4f4fa"/><rect x="9.500" y="10.900" width="4" height="3.600" fill="#f4f4fa"/></svg></div>
<div class="tt" style="left:63px;top:321px">2层 （标准层2）</div>
<svg class="star" style="top:319px" viewBox="0 0 18 18"><path d="M9 1l2.300 5.400 5.700.500-4.300 3.800 1.300 5.700L9 13.400 4 16.400l1.300-5.700L1 6.900l5.700-.500z" fill="#e6e6e6"/></svg>
<div class="a" style="left:28px;top:346px;width:1px;height:16px;background:#8a8a8a"></div>
<div class="a" style="left:28px;top:361px;width:11px;height:1px;background:#8a8a8a"></div>
<div class="cb" style="left:42px;top:354px"></div>
<div class="a" style="left:61px;top:353px;width:16px;height:16px"><svg width="100%" height="100%" viewBox="0 0 16 16" style="display:block"><rect x="0.500" y="2.500" width="4" height="4" fill="none" stroke="#a0a0a0"/><rect x="0.500" y="9.500" width="4" height="4" fill="none" stroke="#a0a0a0"/><path d="M7 2.500h9M7 5.500h9M7 8.500h9M7 11.500h9M7 14.500h9" stroke="#a0a0a0" stroke-width="1"/></svg></div>
<div class="tt" style="left:83px;top:353px">2层 （楼层三维图）</div>
<div class="a" style="left:9px;top:393px;width:10px;height:1px;background:#8a8a8a"></div>
<svg class="a" style="left:5px;top:389px" width="8" height="8" viewBox="0 0 8 8"><path d="M7 0.500V7H0.500z" fill="#e8e8e8"/></svg>
<div class="cb" style="left:22px;top:386px"></div>
<div class="a" style="left:41px;top:385px;width:16px;height:16px"><svg width="100%" height="100%" viewBox="0 0 16 16" style="display:block"><rect x="0.500" y="3.300" width="5.500" height="2.200" fill="#e83a24"/><path d="M0.500 6h5.500" stroke="#e8b85a" stroke-width="0.800"/><rect x="8.500" y="0.500" width="6" height="15" fill="#2a2e6c"/><rect x="9.500" y="1.500" width="4" height="3.600" fill="#f4f4fa"/><rect x="9.500" y="6.200" width="4" height="3.600" fill="#f4f4fa"/><rect x="9.500" y="10.900" width="4" height="3.600" fill="#f4f4fa"/></svg></div>
<div class="tt" style="left:63px;top:385px">1层 （标准层1）</div>
<svg class="star" style="top:383px" viewBox="0 0 18 18"><path d="M9 1l2.300 5.400 5.700.500-4.300 3.800 1.300 5.700L9 13.400 4 16.400l1.300-5.700L1 6.900l5.700-.500z" fill="#e6e6e6"/></svg>
<div class="a" style="left:28px;top:410px;width:1px;height:16px;background:#8a8a8a"></div>
<div class="a" style="left:28px;top:425px;width:11px;height:1px;background:#8a8a8a"></div>
<div class="cb" style="left:42px;top:418px"></div>
<div class="a" style="left:61px;top:417px;width:16px;height:16px"><svg width="100%" height="100%" viewBox="0 0 16 16" style="display:block"><rect x="0.500" y="2.500" width="4" height="4" fill="none" stroke="#a0a0a0"/><rect x="0.500" y="9.500" width="4" height="4" fill="none" stroke="#a0a0a0"/><path d="M7 2.500h9M7 5.500h9M7 8.500h9M7 11.500h9M7 14.500h9" stroke="#a0a0a0" stroke-width="1"/></svg></div>
<div class="tt" style="left:83px;top:417px">1层 （楼层三维图）</div>
<div class="a" style="left:9px;top:457px;width:10px;height:1px;background:#8a8a8a"></div>
<svg class="a" style="left:5px;top:453px" width="8" height="8" viewBox="0 0 8 8"><path d="M7 0.500V7H0.500z" fill="#e8e8e8"/></svg>
<div class="cb" style="left:22px;top:450px"></div>
<div class="a" style="left:41px;top:449px;width:16px;height:16px"><svg width="100%" height="100%" viewBox="0 0 16 16" style="display:block"><rect x="0.500" y="3.300" width="5.500" height="2.200" fill="#e83a24"/><path d="M0.500 6h5.500" stroke="#e8b85a" stroke-width="0.800"/><rect x="8.500" y="0.500" width="6" height="15" fill="#2a2e6c"/><rect x="9.500" y="1.500" width="4" height="3.600" fill="#f4f4fa"/><rect x="9.500" y="6.200" width="4" height="3.600" fill="#f4f4fa"/><rect x="9.500" y="10.900" width="4" height="3.600" fill="#f4f4fa"/></svg></div>
<div class="tt" style="left:63px;top:449px">基础面 （基础面）</div>
<svg class="star" style="top:447px" viewBox="0 0 18 18"><path d="M9 1l2.300 5.400 5.700.500-4.300 3.800 1.300 5.700L9 13.400 4 16.400l1.300-5.700L1 6.900l5.700-.500z" fill="#e6e6e6"/></svg>
<div class="a" style="left:28px;top:474px;width:1px;height:16px;background:#8a8a8a"></div>
<div class="a" style="left:28px;top:489px;width:11px;height:1px;background:#8a8a8a"></div>
<div class="cb" style="left:42px;top:482px"></div>
<div class="a" style="left:61px;top:481px;width:16px;height:16px"><svg width="100%" height="100%" viewBox="0 0 16 16" style="display:block"><rect x="0.500" y="2.500" width="4" height="4" fill="none" stroke="#a0a0a0"/><rect x="0.500" y="9.500" width="4" height="4" fill="none" stroke="#a0a0a0"/><path d="M7 2.500h9M7 5.500h9M7 8.500h9M7 11.500h9M7 14.500h9" stroke="#a0a0a0" stroke-width="1"/></svg></div>
<div class="tt" style="left:83px;top:481px">基础面 （楼层三维图）</div>
<div class="a" style="left:9px;top:521px;width:10px;height:1px;background:#8a8a8a"></div>
<svg class="a" style="left:5px;top:517px" width="8" height="8" viewBox="0 0 8 8"><path d="M7 0.500V7H0.500z" fill="#e8e8e8"/></svg>
<div class="cb" style="left:22px;top:514px"></div>
<div class="a" style="left:41px;top:513px;width:16px;height:16px"><svg width="100%" height="100%" viewBox="0 0 16 16" style="display:block"><rect x="0.500" y="0.500" width="9" height="9" fill="#d8e8a8" stroke="#5ca82c" stroke-width="1"/><path d="M2 3h6M2 5h6M2 7h6" stroke="#8a9a50" stroke-width="0.700"/><rect x="5.500" y="5.500" width="10" height="10" fill="#e8f2fc" stroke="#2c78d0" stroke-width="1.200"/><path d="M7.500 8.500h6M7.500 10.500h6M7.500 12.500h6M9.500 7.500v6M11.500 7.500v6" stroke="#2c78d0" stroke-width="0.800"/></svg></div>
<div class="tt" style="left:63px;top:513px">系统三维图</div>
<div class="a" style="left:28px;top:538px;width:1px;height:16px;background:#8a8a8a"></div>
<div class="a" style="left:28px;top:553px;width:11px;height:1px;background:#8a8a8a"></div>
<div class="cb" style="left:42px;top:546px"></div>
<div class="a" style="left:61px;top:545px;width:16px;height:16px"><svg width="100%" height="100%" viewBox="0 0 16 16" style="display:block"><defs><linearGradient id="cbg" x1="0" y1="0" x2="1" y2="1"><stop offset="0" stop-color="#e8ecf0"/><stop offset="1" stop-color="#a8b0b8"/></linearGradient></defs><rect x="1" y="1" width="14" height="14" fill="url(#cbg)" stroke="#8890a0" stroke-width="0.600"/></svg></div>
<div class="tt" style="left:83px;top:545px">全视图</div>
<div class="a" style="left:9px;top:585px;width:10px;height:1px;background:#8a8a8a"></div>
<div class="cb" style="left:22px;top:578px"></div>
<div class="a" style="left:41px;top:577px;width:16px;height:16px"><svg width="100%" height="100%" viewBox="0 0 16 16" style="display:block"><defs><radialGradient id="spg" cx="0.400" cy="0.350" r="0.700"><stop offset="0" stop-color="#e0e0e0"/><stop offset="1" stop-color="#8c8c8c"/></radialGradient></defs><circle cx="8" cy="8" r="7" fill="url(#spg)"/></svg></div>
<div class="tt" style="left:63px;top:577px">地质资料</div>
<div class="a" style="left:9px;top:617px;width:10px;height:1px;background:#8a8a8a"></div>
<div class="cb" style="left:22px;top:610px"></div>
<div class="a" style="left:41px;top:609px;width:16px;height:16px"><svg width="100%" height="100%" viewBox="0 0 16 16" style="display:block"><defs><radialGradient id="spg" cx="0.400" cy="0.350" r="0.700"><stop offset="0" stop-color="#e0e0e0"/><stop offset="1" stop-color="#8c8c8c"/></radialGradient></defs><circle cx="8" cy="8" r="7" fill="url(#spg)"/></svg></div>
<div class="tt" style="left:63px;top:609px">目录</div>
<div class="a" style="left:9px;top:649px;width:10px;height:1px;background:#8a8a8a"></div>
<div class="cb" style="left:22px;top:642px"></div>
<div class="a" style="left:41px;top:641px;width:16px;height:16px"><svg width="100%" height="100%" viewBox="0 0 16 16" style="display:block"><defs><radialGradient id="spg" cx="0.400" cy="0.350" r="0.700"><stop offset="0" stop-color="#e0e0e0"/><stop offset="1" stop-color="#8c8c8c"/></radialGradient></defs><circle cx="8" cy="8" r="7" fill="url(#spg)"/></svg></div>
<div class="tt" style="left:63px;top:641px">总说明</div>
<div class="a" style="left:9px;top:681px;width:10px;height:1px;background:#8a8a8a"></div>
<div class="cb" style="left:22px;top:674px"></div>
<div class="a" style="left:41px;top:673px;width:16px;height:16px"><svg width="100%" height="100%" viewBox="0 0 16 16" style="display:block"><rect x="0.500" y="0.500" width="6" height="6" fill="#dfe6f4" stroke="#8a98c0" stroke-width="0.700"/><rect x="4" y="4" width="7.500" height="7.500" fill="#e0a052" stroke="#a87430" stroke-width="0.600"/><rect x="9" y="9" width="6.500" height="6.500" fill="#e8eef8" stroke="#8a98c0" stroke-width="0.700"/></svg></div>
<div class="tt" style="left:63px;top:673px">详图</div>
<div class="a" style="left:0;top:917px;width:340px;height:56px;background:#3d3d3d;border-top:1px solid #565656"></div>
<div class="a" style="left:0;top:973px;width:343px;height:3px;background:#2f3748"></div>
<div class="a" style="left:0;top:927px;width:36px;height:36px;background:#484848;border-radius:5px"></div>
<div class="a" style="left:2px;top:931px;width:30px;height:30px"><svg width="100%" height="100%" viewBox="0 0 30 30" style="display:block"><path d="M12 13L24.500 25.500" stroke="#8a9098" stroke-width="4.600" stroke-linecap="round"/><path d="M12 13L24.500 25.500" stroke="#cdd1d7" stroke-width="3.200" stroke-linecap="round"/><circle cx="8" cy="8.500" r="5.600" fill="#e2e6ea" stroke="#9aa0a8" stroke-width="0.600"/><circle cx="5" cy="5.300" r="3.300" fill="#484848"/><path d="M14.500 6.500Q18 1.500 24 3.500L28.500 7.500L30.500 11.500L27.500 14L25.500 11L22.500 8.800Q18.500 6.500 16 9.500z" fill="#d6dade" stroke="#8e949c" stroke-width="0.700"/><path d="M17 5.500Q20 3.500 24 5" stroke="#f4f6f8" stroke-width="1" fill="none"/><path d="M20.500 11.500L5.500 26" stroke="#c87818" stroke-width="5.200" stroke-linecap="round"/><path d="M20.500 11.500L5.500 26" stroke="#f0a234" stroke-width="4" stroke-linecap="round"/><path d="M19 11.500L6 24" stroke="#f8d498" stroke-width="1.300" stroke-linecap="round"/></svg></div>
<div class="rb" style="left:48px;top:929px;width:95px;height:33px"></div>
<div class="a" style="left:57px;top:934px;width:22px;height:22px"><svg width="100%" height="100%" viewBox="0 0 22 22" style="display:block"><path d="M11.00 0.50A10.5 10.5 0 0 1 18.42 3.58L14.54 7.46A5 5 0 0 0 11.00 6.00z" fill="#8a90cc"/><path d="M18.42 3.58A10.5 10.5 0 0 1 21.46 10.08L15.98 10.56A5 5 0 0 0 14.54 7.46z" fill="#a8a6c4"/><path d="M21.46 10.08A10.5 10.5 0 0 1 18.42 18.42L14.54 14.54A5 5 0 0 0 15.98 10.56z" fill="#dc3030"/><path d="M18.42 18.42A10.5 10.5 0 0 1 11.00 21.50L11.00 16.00A5 5 0 0 0 14.54 14.54z" fill="#e87a2a"/><path d="M11.00 21.50A10.5 10.5 0 0 1 3.58 18.42L7.46 14.54A5 5 0 0 0 11.00 16.00z" fill="#f2d4a0"/><path d="M3.58 18.42A10.5 10.5 0 0 1 0.60 12.46L6.05 11.70A5 5 0 0 0 7.46 14.54z" fill="#a49c54"/><path d="M0.60 12.46A10.5 10.5 0 0 1 0.56 9.90L6.03 10.48A5 5 0 0 0 6.05 11.70z" fill="#52b032"/><path d="M0.56 9.90A10.5 10.5 0 0 1 3.97 3.20L7.65 7.28A5 5 0 0 0 6.03 10.48z" fill="#6eaaee"/><path d="M3.97 3.20A10.5 10.5 0 0 1 11.00 0.50L11.00 6.00A5 5 0 0 0 7.65 7.28z" fill="#4a82de"/><circle cx="11" cy="11" r="10.500" fill="none" stroke="#2c3c70" stroke-width="0.500" opacity="0.600"/></svg></div>
<div class="t" style="left:86px;top:937px;color:#fff">视觉样式</div>
<div class="rb" style="left:142px;top:929px;width:28px;height:33px"></div>
<div class="a" style="left:150px;top:938px;width:12px;height:14px"><svg width="12" height="14" viewBox="0 0 12 14" style="display:block"><defs><linearGradient id="aug" x1="0" y1="0" x2="0" y2="1"><stop offset="0" stop-color="#b8e0fc"/><stop offset="1" stop-color="#5ea8e8"/></linearGradient></defs><path d="M6 0.500l5.500 7H8.200v6H3.800v-6H0.500z" fill="url(#aug)" stroke="#4a8cd8" stroke-width="0.600"/></svg></div>
<div class="rb" style="left:186px;top:929px;width:95px;height:33px"></div>
<div class="a" style="left:197px;top:935px;width:20px;height:21px"><svg width="20" height="21" viewBox="0 0 20 21" style="display:block"><rect x="0.500" y="0.500" width="18.500" height="20" rx="1" fill="#62bc40"/><path d="M0.500 12V0.500H17" stroke="#e8b060" stroke-width="1.200" fill="none"/><rect x="4" y="3.500" width="13.500" height="10" fill="#8cc8f4" stroke="#f4f6f8" stroke-width="1.200"/><path d="M4.600 12.800l4-4.500 3 2.500 2.500-2 3 4z" fill="#58a838"/><path d="M5 7l6 3" stroke="#e8f4fc" stroke-width="1.400"/><circle cx="14" cy="6.500" r="1.500" fill="#f4fafe"/></svg></div>
<div class="t" style="left:224px;top:937px;color:#fff">底图管理</div>
<div class="rb" style="left:280px;top:929px;width:28px;height:33px"></div>
<div class="a" style="left:288px;top:938px;width:12px;height:14px"><svg width="12" height="14" viewBox="0 0 12 14" style="display:block"><defs><linearGradient id="aug" x1="0" y1="0" x2="0" y2="1"><stop offset="0" stop-color="#b8e0fc"/><stop offset="1" stop-color="#5ea8e8"/></linearGradient></defs><path d="M6 0.500l5.500 7H8.200v6H3.800v-6H0.500z" fill="url(#aug)" stroke="#4a8cd8" stroke-width="0.600"/></svg></div>
<div class="a" style="left:343px;top:174px;width:1575px;height:744px;background:#212830"></div>
<div class="t" style="left:346px;top:179px;color:#e8e8e8">[−][俯视][二维线框]</div>
<svg class="a" style="left:1850px;top:180px" width="62" height="16" viewBox="0 0 62 16"><path d="M6.500 9.500h10.500v3H6.500z" fill="#ececec"/>
<path d="M27.500 7.500h6v5h-6zM30 7V5h6.500v5.500H34" stroke="#ececec" stroke-width="1.900" fill="none"/>
<path d="M47.500 5l8.500 8m0-8l-8.500 8" stroke="#f2f2f2" stroke-width="2.300" fill="none"/></svg>
<div class="a" style="left:1774px;top:220px;width:121px;height:121px;border-radius:50%;border:13px solid #40454f"></div>
<div class="a" style="left:1809px;top:254px;width:52px;height:52px;background:#a9a9b1"></div>
<div class="a" style="left:1819px;top:264px;width:32px;height:32px;background:#9ea5b5"></div>
<div class="t c" style="left:1819px;top:264px;width:32px;height:32px;line-height:30px;font-size:27px;color:#585c66;font-family:'Liberation Serif','Noto Serif CJK SC',serif;font-weight:700;margin-top:0">上</div>
<div class="t c" style="left:1822px;top:213px;width:24px;height:24px;line-height:24px;font-size:20px;color:#b4b4b4;font-family:'Liberation Serif','Noto Serif CJK SC',serif">北</div>
<div class="t c" style="left:1766px;top:269px;width:24px;height:24px;line-height:24px;font-size:20px;color:#b4b4b4;font-family:'Liberation Serif','Noto Serif CJK SC',serif">西</div>
<div class="t c" style="left:1878px;top:269px;width:24px;height:24px;line-height:24px;font-size:20px;color:#b4b4b4;font-family:'Liberation Serif','Noto Serif CJK SC',serif">东</div>
<div class="t c" style="left:1822px;top:326px;width:24px;height:24px;line-height:24px;font-size:20px;color:#b4b4b4;font-family:'Liberation Serif','Noto Serif CJK SC',serif">南</div>
<div class="a" style="left:1811px;top:367px;width:48px;height:17px;background:#80858f;border:1px solid #9a9fa8;border-radius:4px"></div>
<div class="t" style="left:1815px;top:368px;font-size:11px;line-height:15px;color:#3a3f4a">WCS</div>
<svg class="a" style="left:1844px;top:372px" width="10" height="8" viewBox="0 0 10 8"><path d="M1 1h7l-3.500 4.500z" fill="none" stroke="#b0b6c4" stroke-width="1"/></svg>
<svg class="a" style="left:640px;top:470px" width="800" height="120" viewBox="640 470 800 120" shape-rendering="crispEdges"><rect x="663.500" y="510.500" width="746" height="57" fill="none" stroke="#f2dc14" stroke-width="1"/><rect x="721.500" y="510.500" width="631" height="57" fill="none" stroke="#12e0e6" stroke-width="1"/><path d="M692 539.500H1381" stroke="#10e8f0" stroke-width="1" stroke-dasharray="1 2.583"/><path d="M692.500 510V490.500H1380.500V510" fill="none" stroke="#9c181c" stroke-width="1"/><path d="M688.5 504L692.5 510L696.5 504" fill="none" stroke="#9c181c" stroke-width="1" shape-rendering="auto"/><path d="M790.5 490.500V510" stroke="#9c181c" stroke-width="1"/><path d="M786.5 504L790.5 510L794.5 504" fill="none" stroke="#9c181c" stroke-width="1" shape-rendering="auto"/><path d="M889.5 490.500V510" stroke="#9c181c" stroke-width="1"/><path d="M885.5 504L889.5 510L893.5 504" fill="none" stroke="#9c181c" stroke-width="1" shape-rendering="auto"/><path d="M987.5 490.500V510" stroke="#9c181c" stroke-width="1"/><path d="M983.5 504L987.5 510L991.5 504" fill="none" stroke="#9c181c" stroke-width="1" shape-rendering="auto"/><path d="M1085.5 490.500V510" stroke="#9c181c" stroke-width="1"/><path d="M1081.5 504L1085.5 510L1089.5 504" fill="none" stroke="#9c181c" stroke-width="1" shape-rendering="auto"/><path d="M1183.5 490.500V510" stroke="#9c181c" stroke-width="1"/><path d="M1179.5 504L1183.5 510L1187.5 504" fill="none" stroke="#9c181c" stroke-width="1" shape-rendering="auto"/><path d="M1282.5 490.500V510" stroke="#9c181c" stroke-width="1"/><path d="M1278.5 504L1282.5 510L1286.5 504" fill="none" stroke="#9c181c" stroke-width="1" shape-rendering="auto"/><path d="M1376.5 504L1380.5 510L1384.5 504" fill="none" stroke="#9c181c" stroke-width="1" shape-rendering="auto"/><path d="M692.5 539V511" stroke="#9c181c" stroke-width="1"/><path d="M690.0 519.500L692.5 512L695.0 519.500" fill="none" stroke="#b0181c" stroke-width="1.1" shape-rendering="auto"/><path d="M692.5 512v4" stroke="#b0181c" stroke-width="2.4" shape-rendering="auto"/><circle cx="692.5" cy="539.500" r="4" fill="none" stroke="#454b58" stroke-width="1" stroke-dasharray="2 1.500" shape-rendering="auto"/><path d="M1380.5 539V511" stroke="#9c181c" stroke-width="1"/><path d="M1378.0 519.500L1380.5 512L1383.0 519.500" fill="none" stroke="#b0181c" stroke-width="1.1" shape-rendering="auto"/><path d="M1380.5 512v4" stroke="#b0181c" stroke-width="2.4" shape-rendering="auto"/><circle cx="1380.5" cy="539.500" r="4" fill="none" stroke="#454b58" stroke-width="1" stroke-dasharray="2 1.500" shape-rendering="auto"/><text x="1019" y="506" font-family="Liberation Sans, sans-serif" font-size="13" fill="#c41c20" letter-spacing="0.4">20.0</text></svg>
<svg class="a" style="left:350px;top:825px" width="90" height="85" viewBox="350 825 90 85" shape-rendering="crispEdges">
<path d="M361.500 849V899.500H412" stroke="#f0f0f0" stroke-width="1" fill="none"/>
<rect x="357.500" y="894.500" width="9" height="9" fill="none" stroke="#f0f0f0"/>
<path d="M363 832l6.500 7 6.500-7M369.500 839v6" stroke="#f0f0f0" fill="none" shape-rendering="auto"/>
<path d="M416.500 885.500l12.500 12m0-12l-12.500 12" stroke="#f0f0f0" fill="none" shape-rendering="auto"/>
</svg>
<div class="t c" style="left:885px;top:863px;margin-top:0;letter-spacing:0.18px;width:500px;height:24px;line-height:24px;font-size:18px;color:#e0e0e0;font-family:'Liberation Sans','Noto Serif CJK SC',serif">当前视图：体系0_3层（楼层三维图）</div>
<div class="t c" style="left:879px;top:887px;margin-top:0;width:500px;height:24px;line-height:24px;font-size:18px;color:#e0e0e0;font-family:'Liberation Sans','Noto Serif CJK SC',serif">当前楼层：体系0_3层(标准层2)_H=6.000m</div>
<div class="a" style="left:343px;top:918px;width:1575px;height:3px;background:#3c4252"></div>
<div class="a" style="left:343px;top:921px;width:25px;height:55px;background:#21272f"></div>
<div class="a" style="left:368px;top:921px;width:1548px;height:35px;background:#c8c8c8"></div>
<div class="a" style="left:368px;top:956px;width:1548px;height:1px;background:#3a4050"></div>
<div class="a" style="left:368px;top:957px;width:1548px;height:19px;background:#ffffff"></div>
<div class="a" style="left:1916px;top:921px;width:2px;height:55px;background:#21272f"></div>
<div class="t" style="left:370px;top:924px;color:#111;font-family:'DejaVu Sans Mono','Liberation Mono','Noto Sans Mono CJK SC','Noto Sans CJK SC',monospace;font-size:11.6px;line-height:15px"><span style="letter-spacing:1.5px">命令</span>:</div>
<div class="t" style="left:370px;top:939px;color:#111;font-family:'DejaVu Sans Mono','Liberation Mono','Noto Sans Mono CJK SC','Noto Sans CJK SC',monospace;font-size:11.6px;line-height:15px"><span style="letter-spacing:1.5px">命令</span>: CmdExportYJKA</div>
<div class="t" style="left:405px;top:958px;color:#8a8a8a;font-style:italic;font-size:13px">键入命令</div>
<svg class="a" style="left:345px;top:922px" width="22" height="54" viewBox="0 0 22 54">
<g fill="#f0f0f0"><rect x="2.0" y="3" width="1.800" height="1.800"/><rect x="4.5" y="3" width="1.800" height="1.800"/><rect x="7.0" y="3" width="1.800" height="1.800"/><rect x="9.5" y="3" width="1.800" height="1.800"/><rect x="12.0" y="3" width="1.800" height="1.800"/><rect x="14.5" y="3" width="1.800" height="1.800"/><rect x="17.0" y="3" width="1.800" height="1.800"/><rect x="2.0" y="5.7" width="1.800" height="1.800"/><rect x="4.5" y="5.7" width="1.800" height="1.800"/><rect x="7.0" y="5.7" width="1.800" height="1.800"/><rect x="9.5" y="5.7" width="1.800" height="1.800"/><rect x="12.0" y="5.7" width="1.800" height="1.800"/><rect x="14.5" y="5.7" width="1.800" height="1.800"/><rect x="17.0" y="5.7" width="1.800" height="1.800"/></g>
<path d="M5 15l8 8m0-8l-8 8" stroke="#f0f0f0" stroke-width="1.700" fill="none"/>
<path d="M3 50l7.500-7.500a4 4 0 0 1 5-5l-2.800 2.800 1.700 1.700 2.800-2.800a4 4 0 0 1-5 5l-7.500 7.500z" fill="#f0f0f0" transform="translate(0,-1.500)"/>
</svg>
<svg class="a" style="left:371px;top:960px" width="30" height="14" viewBox="0 0 30 14"><rect x="1.500" y="1.500" width="15" height="10" fill="#fff" stroke="#555"/><rect x="1" y="1" width="16" height="2.500" fill="#666"/><path d="M4 6l2 1.500-2 1.500M7 9.500h3" stroke="#333" fill="none" stroke-width="1"/><path d="M20 5h7l-3.500 4z" fill="#555"/></svg>
<div class="a" style="left:1918px;top:0;width:2px;height:976px;background:#000"></div>
</body></html>
